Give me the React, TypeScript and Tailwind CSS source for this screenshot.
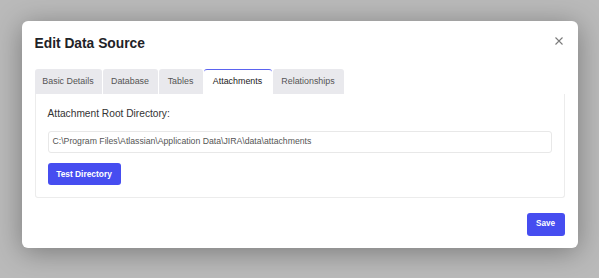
import React from 'react';

const TABS = [
  { label: 'Basic Details', w: 'w-[67px]' },
  { label: 'Database', w: 'w-[55px]' },
  { label: 'Tables', w: 'w-[44px]' },
  { label: 'Attachments', w: 'w-[68px]' },
  { label: 'Relationships', w: 'w-[71px]' },
];

export default function App() {
  const active = 'Attachments';
  return (
    <div
      className="flex h-[278px] w-[599px] items-start justify-center bg-[#bababa] pt-[21px]"
      style={{ fontFamily: '"Liberation Sans", Arial, sans-serif' }}
    >
      <div className="relative h-[227px] w-[556px] rounded-md bg-white px-[13px] pt-[12px] shadow-[0_4px_28px_rgba(0,0,0,0.35)]">
        <h1 className="text-[13.8px] font-bold leading-[22px] text-[#1f2328]">Edit Data Source</h1>
        <button className="absolute right-[14px] top-[15px] flex h-[10px] w-[10px] items-center justify-center text-[#7a7a7a]">
          <svg width="8" height="8" viewBox="0 0 8 8" fill="none" stroke="currentColor" strokeWidth="1.1">
            <path d="M0.5 0.5l7 7M7.5 0.5l-7 7" />
          </svg>
        </button>

        <div className="mt-[14px] flex gap-px">
          {TABS.map((t) => (
            <div
              key={t.label}
              className={
                t.label === active
                  ? `flex h-[25px] ${t.w} items-center justify-center rounded-t-[3px] border-t-[1.5px] border-[#5b63f0] bg-white text-[8.9px] text-[#222]`
                  : `flex h-[25px] ${t.w} items-center justify-center rounded-t-[3px] bg-[#e9e9ed] text-[8.9px] text-[#555]`
              }
            >
              {t.label}
            </div>
          ))}
        </div>

        <div className="h-[104px] w-[530px] rounded-b-[3px] border border-t-0 border-[#ececec] px-[12px] pt-[11px]">
          <p className="text-[10.2px] leading-[18px] text-[#333]">Attachment Root Directory:</p>
          <div className="mt-[8px] flex h-[22px] items-center rounded-[3px] border border-[#e8e8e8] px-[4px] text-[8.7px] text-[#555]">
            C:\Program Files\Atlassian\Application Data\JIRA\data\attachments
          </div>
          <button className="mt-[10px] h-[22px] w-[73px] rounded-[3px] bg-[#464df0] text-[8.4px] font-bold text-white">
            Test Directory
          </button>
        </div>

        <div className="mt-[15px] flex justify-end">
          <button className="h-[23px] w-[38px] rounded-[3px] bg-[#464df0] text-[8.2px] font-bold text-white">
            Save
          </button>
        </div>
      </div>
    </div>
  );
}
